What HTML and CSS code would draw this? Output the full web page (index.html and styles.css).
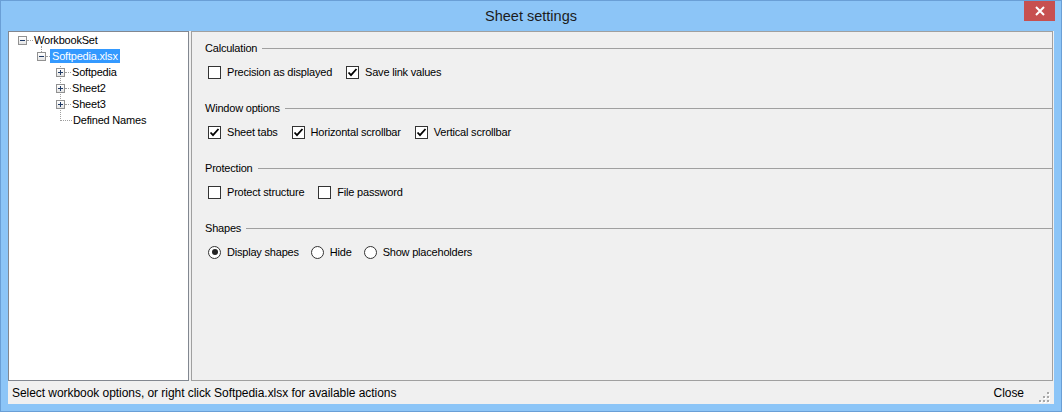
FILE: index.html
```html
<!DOCTYPE html>
<html lang="en">
<head>
    <meta charset="UTF-8">
    <title>Sheet settings</title>
    <link rel="stylesheet" href="styles.css">
</head>
<body>
    <div class="window">
        <!-- Caption -->
        <div class="titlebar">
            <span></span>
            <span class="title">Sheet settings</span>
            <div class="close-btn">
                <svg width="10" height="10" viewBox="0 0 10 10"><path d="M1 1 L9 9 M9 1 L1 9" stroke="#fff" stroke-width="2"/></svg>
            </div>
        </div>

        <div class="client">
            <div class="main">
                <!-- Workbook tree -->
                <div class="tree">
                    <div class="node root">
                        <span class="exp minus"></span><span class="dots"></span><span class="label">WorkbookSet</span>
                    </div>
                    <div class="children level1">
                        <div class="node">
                            <span class="exp minus"></span><span class="dots short"></span><span class="label selected">Softpedia.xlsx</span>
                        </div>
                        <div class="children level2">
                            <div class="node"><span class="exp plus"></span><span class="dots"></span><span class="label">Softpedia</span></div>
                            <div class="node"><span class="exp plus"></span><span class="dots"></span><span class="label">Sheet2</span></div>
                            <div class="node"><span class="exp plus"></span><span class="dots"></span><span class="label">Sheet3</span></div>
                            <div class="node leaf"><span class="dots long"></span><span class="label">Defined Names</span></div>
                        </div>
                    </div>
                </div>

                <!-- Option groups -->
                <div class="options">
                    <section class="group">
                        <div class="group-head"><span>Calculation</span></div>
                        <div class="group-row">
                            <label class="check"><span class="box"></span>Precision as displayed</label>
                            <label class="check on"><span class="box"><svg width="11" height="11" viewBox="0 0 11 11"><path d="M1.5 5.5 L4 8.2 L9.5 2" fill="none" stroke="#000" stroke-width="1.8"/></svg></span>Save link values</label>
                        </div>
                    </section>

                    <section class="group">
                        <div class="group-head"><span>Window options</span></div>
                        <div class="group-row">
                            <label class="check on"><span class="box"><svg width="11" height="11" viewBox="0 0 11 11"><path d="M1.5 5.5 L4 8.2 L9.5 2" fill="none" stroke="#000" stroke-width="1.8"/></svg></span>Sheet tabs</label>
                            <label class="check on"><span class="box"><svg width="11" height="11" viewBox="0 0 11 11"><path d="M1.5 5.5 L4 8.2 L9.5 2" fill="none" stroke="#000" stroke-width="1.8"/></svg></span>Horizontal scrollbar</label>
                            <label class="check on"><span class="box"><svg width="11" height="11" viewBox="0 0 11 11"><path d="M1.5 5.5 L4 8.2 L9.5 2" fill="none" stroke="#000" stroke-width="1.8"/></svg></span>Vertical scrollbar</label>
                        </div>
                    </section>

                    <section class="group">
                        <div class="group-head"><span>Protection</span></div>
                        <div class="group-row">
                            <label class="check"><span class="box"></span>Protect structure</label>
                            <label class="check"><span class="box"></span>File password</label>
                        </div>
                    </section>

                    <section class="group">
                        <div class="group-head"><span>Shapes</span></div>
                        <div class="group-row radios">
                            <label class="radio on"><span class="circle"></span>Display shapes</label>
                            <label class="radio"><span class="circle"></span>Hide</label>
                            <label class="radio"><span class="circle"></span>Show placeholders</label>
                        </div>
                    </section>
                </div>
            </div>

            <!-- Status strip -->
            <div class="statusbar">
                <span class="status-text">Select workbook options, or right click Softpedia.xlsx for available actions</span>
                <span class="close-link">Close</span>
                <svg class="grip" width="12" height="12" viewBox="0 0 12 12">
                    <g fill="#fff"><rect x="10" y="2" width="2" height="2"/><rect x="10" y="6" width="2" height="2"/><rect x="10" y="10" width="2" height="2"/><rect x="6" y="6" width="2" height="2"/><rect x="6" y="10" width="2" height="2"/><rect x="2" y="10" width="2" height="2"/></g>
                    <g fill="#a8a8a8"><rect x="9" y="1" width="2" height="2"/><rect x="9" y="5" width="2" height="2"/><rect x="9" y="9" width="2" height="2"/><rect x="5" y="5" width="2" height="2"/><rect x="5" y="9" width="2" height="2"/><rect x="1" y="9" width="2" height="2"/></g>
                </svg>
            </div>
        </div>
    </div>
</body>
</html>
```

FILE: styles.css
```css
* {
    margin: 0;
    padding: 0;
    box-sizing: border-box;
}

body {
    font-family: 'Liberation Sans', Arial, sans-serif;
    background: #8cc5f7;
}

.window {
    width: 1062px;
    height: 412px;
    background: #8cc5f7;
    border: 1px solid #6a9fd6;
    display: flex;
    flex-direction: column;
}

/* caption */
.titlebar {
    height: 30px;
    display: grid;
    grid-template-columns: 1fr auto 1fr;
}

.title {
    line-height: 30px;
    font-size: 14.5px;
    color: #1c1c1c;
}

.close-btn {
    justify-self: end;
    width: 31px;
    height: 20px;
    margin-right: 6px;
    background: #c75050;
    display: flex;
    align-items: center;
    justify-content: center;
}

/* client area */
.client {
    flex: 1;
    margin: 0 7px 7px 7px;
    background: #f0f0f0;
    display: flex;
    flex-direction: column;
    font-size: 11px;
    letter-spacing: -0.2px;
    color: #000;
}

.main {
    flex: 1;
    display: flex;
    gap: 2px;
}

/* tree */
.tree {
    width: 181px;
    background: #fff;
    border: 1px solid #828790;
    padding-left: 9px;
}

.node {
    height: 16px;
    display: flex;
    align-items: center;
}

.exp {
    width: 9px;
    height: 9px;
    border: 1px solid #919191;
    background: linear-gradient(#fff, #e4e4e4);
    position: relative;
    flex-shrink: 0;
}

.exp::before {
    content: "";
    position: absolute;
    left: 1px;
    top: 3px;
    width: 5px;
    height: 1px;
    background: #1f3a66;
}

.exp.plus::after {
    content: "";
    position: absolute;
    left: 3px;
    top: 1px;
    width: 1px;
    height: 5px;
    background: #1f3a66;
}

.dots {
    width: 6px;
    border-top: 1px dotted #a0a0a0;
    flex-shrink: 0;
}

.dots.short {
    width: 4px;
}

.dots.long {
    width: 12px;
    margin-left: 4px;
}

.label {
    padding-left: 1px;
    white-space: nowrap;
}

.label.selected {
    background: #3399ff;
    color: #fff;
    padding: 1px 2px 1px 2px;
}

.children {
    position: relative;
}

.level1 {
    padding-left: 19px;
}

.level1::before {
    content: "";
    position: absolute;
    left: 23px;
    top: -2px;
    height: 6px;
    border-left: 1px dotted #a0a0a0;
}

.level2 {
    padding-left: 19px;
}

.level2::before {
    content: "";
    position: absolute;
    left: 23px;
    top: 2px;
    height: 55px;
    border-left: 1px dotted #a0a0a0;
}

/* options panel */
.options {
    flex: 1;
    border: 1px solid #a0a0a0;
    margin-right: 1px;
    padding: 8px 0 0 13px;
}

.group {
    margin-bottom: 20px;
}

.group-head {
    height: 16px;
    display: flex;
    align-items: center;
    gap: 5px;
}

.group-head::after {
    content: "";
    flex: 1;
    border-top: 1px solid #a0a0a0;
}

.group-row {
    margin-top: 8px;
    height: 16px;
    padding-left: 3px;
    display: flex;
    align-items: center;
    gap: 14px;
}

.group-row.radios {
    gap: 12px;
}

.check,
.radio {
    display: flex;
    align-items: center;
    gap: 6px;
    white-space: nowrap;
}

.box {
    width: 13px;
    height: 13px;
    border: 1px solid #333;
    background: #fff;
    display: flex;
    align-items: center;
    justify-content: center;
}

.circle {
    width: 13px;
    height: 13px;
    border: 1px solid #333;
    border-radius: 50%;
    background: #fff;
    display: flex;
    align-items: center;
    justify-content: center;
}

.radio.on .circle::after {
    content: "";
    width: 6px;
    height: 6px;
    border-radius: 50%;
    background: #222;
}

/* status strip */
.statusbar {
    height: 23px;
    display: flex;
    align-items: center;
    padding: 0 4px 0 4px;
    font-size: 12px;
    letter-spacing: -0.05px;
}

.status-text {
    flex: 1;
}

.close-link {
    margin-right: 14px;
}

.grip {
    align-self: flex-end;
    margin-bottom: 1px;
}
```
